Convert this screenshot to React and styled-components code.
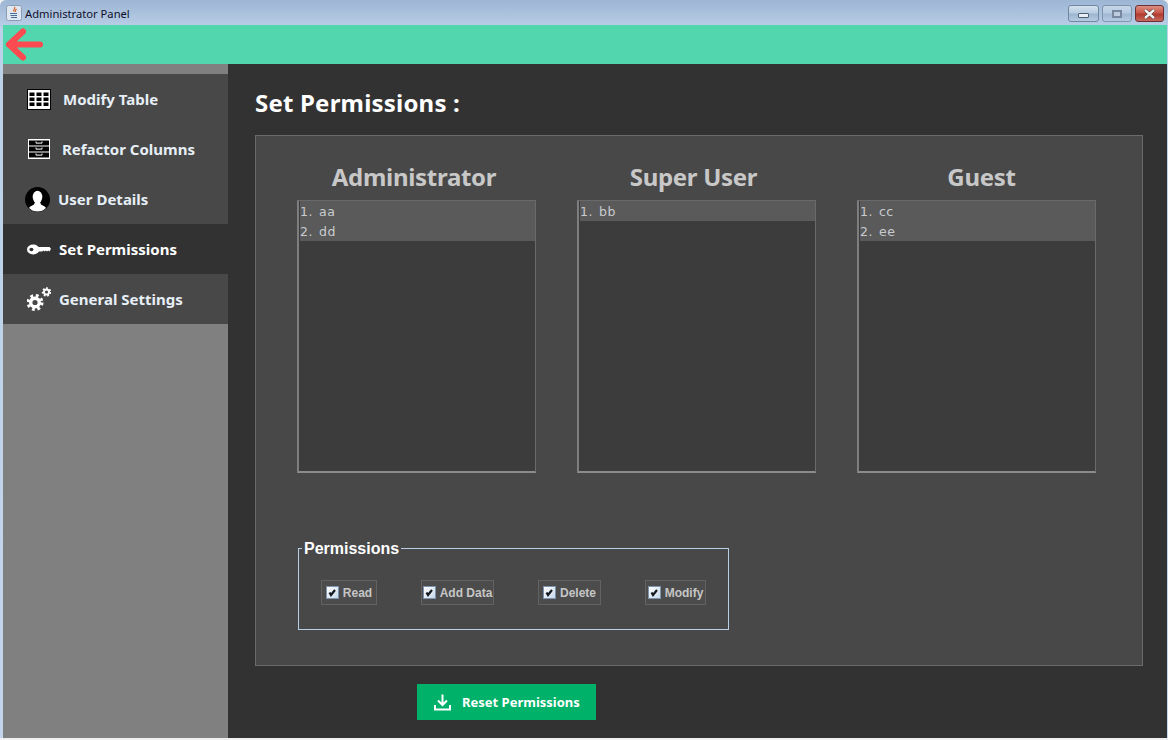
import React from 'react'
import styled, { createGlobalStyle } from 'styled-components'

const GlobalStyle = createGlobalStyle`
  html, body {
    margin: 0;
    padding: 0;
    background: #f0f0f0;
    overflow: hidden;
  }
  * {
    box-sizing: border-box;
  }
`

const Window = styled.div`
  display: flex;
  flex-direction: column;
  width: 1168px;
  height: 738px;
  padding: 0 1px 0 3px;
  background: linear-gradient(180deg, #9db6d4 0%, #bcd0e8 4%, #c3d6ec 100%);
  border-radius: 6px 6px 0 0;
  font-family: 'Noto Sans', sans-serif;
`

const TitleBar = styled.div`
  display: flex;
  align-items: center;
  height: 25px;
  flex: none;
  padding-left: 3px;
`

const TitleText = styled.span`
  margin: 1px 0 0 3px;
  font-family: 'Noto Sans', sans-serif;
  font-size: 11.2px;
  color: #10102a;
`

const WindowControls = styled.div`
  display: flex;
  gap: 3px;
  margin-left: auto;
  margin-right: 3px;
  margin-top: 2px;
`

const ControlButton = styled.div`
  display: flex;
  align-items: center;
  justify-content: center;
  width: ${(props) => props.$width}px;
  height: 17px;
  border-radius: 3px;
  border: 1px solid ${(props) => (props.$close ? '#6d2f36' : '#71869f')};
  background: ${(props) =>
    props.$close
      ? 'linear-gradient(180deg, #dc8d80 0%, #c9584b 45%, #b23a2f 55%, #c5685c 100%)'
      : 'linear-gradient(180deg, #d4e1ef 0%, #b9cde2 45%, #9db5cf 55%, #b5cbe2 100%)'};
  opacity: ${(props) => (props.$dim ? 0.75 : 1)};
`

const MinimizeGlyph = styled.div`
  width: 11px;
  height: 5px;
  margin-top: 4px;
  background: #e8eef5;
  border: 1px solid #4f5f73;
  border-radius: 1px;
`

const RestoreGlyph = styled.div`
  width: 10px;
  height: 8px;
  background: #c2cfdd;
  border: 2px solid #66758a;
`

const Toolbar = styled.div`
  display: flex;
  align-items: center;
  flex: none;
  height: 39px;
  background: #52d6ae;
`

const Body = styled.div`
  display: flex;
  flex: 1;
  min-height: 0;
`

const Sidebar = styled.nav`
  display: flex;
  flex-direction: column;
  flex: none;
  width: 225px;
  padding-top: 10px;
  background: #808080;
`

const NavItem = styled.div`
  display: flex;
  align-items: center;
  height: 50px;
  padding-left: ${(props) => props.$inset}px;
  gap: ${(props) => props.$gap}px;
  background: ${(props) => (props.$active ? '#323232' : '#484848')};
  font-size: 15px;
  font-weight: 700;
  color: ${(props) => (props.$active ? '#ffffff' : '#e6eef6')};
`

const Main = styled.main`
  display: flex;
  flex-direction: column;
  flex: 1;
  padding: 24px 24px 0 27px;
  background: #323232;
`

const PageTitle = styled.h1`
  margin: 0;
  height: 47px;
  font-size: 24px;
  line-height: 30px;
  font-weight: 700;
  letter-spacing: 0.2px;
  color: #ffffff;
`

const Panel = styled.section`
  display: flex;
  flex-direction: column;
  width: 888px;
  height: 531px;
  padding: 24px 0 0 41px;
  background: #484848;
  border: 1px solid #6a6a6a;
`

const Columns = styled.div`
  display: flex;
  gap: 41px;
`

const Column = styled.div`
  display: flex;
  flex-direction: column;
  width: 239px;
`

const ColumnTitle = styled.h2`
  margin: 0;
  height: 40px;
  padding-left: ${(props) => Math.max(props.$shift, 0)}px;
  padding-right: ${(props) => Math.max(-props.$shift, 0)}px;
  font-size: 24px;
  line-height: 34px;
  font-weight: 700;
  letter-spacing: -0.3px;
  text-align: center;
  color: #c8c8c8;
`

const RoleList = styled.ol`
  list-style: none;
  margin: 0;
  height: 273px;
  padding: 0 0 0 1px;
  background: #3c3c3c;
  border-top: 1px solid #6a6a6a;
  border-right: 1px solid #6a6a6a;
  border-left: 2px solid #7e7e7e;
  border-bottom: 2px solid #8c8c8c;
`

const RoleRow = styled.li`
  display: flex;
  align-items: center;
  height: 20px;
  background: #5a5a5a;
  font-family: 'DejaVu Sans', sans-serif;
  font-size: 12.5px;
  color: #c8ccd0;
  letter-spacing: 0.5px;
`

const RowIndex = styled.span`
  width: 19px;
`

const PermissionSet = styled.fieldset`
  width: 431px;
  height: 91px;
  margin: 66px 0 0 1px;
  padding: 0;
  border: 1px solid #b8cfe6;
  min-inline-size: 0;
`

const PermissionLegend = styled.legend`
  margin-left: 3px;
  padding: 0 2px;
  font-family: 'Liberation Sans', sans-serif;
  font-size: 16px;
  line-height: 19px;
  font-weight: 700;
  color: #ffffff;
`

const OptionRow = styled.div`
  display: flex;
  gap: 44px;
  padding: 22px 0 0 22px;
`

const CheckOption = styled.label`
  display: flex;
  align-items: center;
  justify-content: center;
  gap: 4px;
  width: ${(props) => props.$width}px;
  height: 25px;
  border: 1px solid #626262;
  background: #4c4c4c;
  font-family: 'Liberation Sans', sans-serif;
  font-size: 12px;
  font-weight: 700;
  color: #c6c6c6;
`

const CheckBox = styled.span`
  display: flex;
  align-items: center;
  justify-content: center;
  flex: none;
  width: 13px;
  height: 13px;
  border: 1px solid #7e93ad;
  background: linear-gradient(135deg, #ffffff 0%, #c6d8ea 100%);
`

const ResetButton = styled.button`
  display: flex;
  align-items: center;
  width: 179px;
  height: 36px;
  margin: 18px 0 0 162px;
  padding: 0 0 0 17px;
  gap: 11px;
  border: none;
  background: #00b16a;
  font-family: 'Noto Sans', sans-serif;
  font-size: 13px;
  font-weight: 700;
  color: #ffffff;
`

const JavaIcon = () => (
  <svg width="16" height="16" viewBox="0 0 16 16">
    <rect x="0.5" y="0.5" width="15" height="15" rx="2" fill="#dfe8f2" stroke="#8c9db3" />
    <path d="M8.500 2c1.500 1.500-2 2.500-.5 4.500M10.500 4c-1 1-2 1.500-1 3" stroke="#d8601f" strokeWidth="1.2" fill="none" />
    <path d="M4 8.500h7M4.500 10.500h6.500M5 12.500h6" stroke="#4a6c94" strokeWidth="1.1" fill="none" />
  </svg>
)

const CloseGlyph = () => (
  <svg width="13" height="10" viewBox="0 0 13 10">
    <path d="M2 1l9 8M11 1l-9 8" stroke="#4a2a2a" strokeWidth="3.6" />
    <path d="M2 1l9 8M11 1l-9 8" stroke="#f2f2f2" strokeWidth="2.4" />
  </svg>
)

const BackArrow = () => (
  <svg width="42" height="36" viewBox="0 0 42 36">
    <path
      d="M37 17.500H6M20 4.500L6 17.500 20 30.500"
      fill="none"
      stroke="#fb4a50"
      strokeWidth="6"
      strokeLinecap="round"
      strokeLinejoin="round"
    />
  </svg>
)

const TableIcon = () => (
  <svg width="24" height="21" viewBox="0 0 24 21">
    <rect width="24" height="21" fill="#000" />
    <rect x="1" y="1" width="22" height="19" fill="#fff" />
    {[3.500, 8.500, 13.500].map((y) =>
      [2.500, 9.500, 16.500].map((x) => <rect key={`${x}-${y}`} x={x} y={y} width="5" height="3.500" fill="#000" />)
    )}
  </svg>
)

const CabinetIcon = () => (
  <svg width="22" height="20" viewBox="0 0 22 20">
    <rect width="22" height="20" fill="#fff" />
    {[1.500, 7.500, 13.500].map((y) => (
      <g key={y}>
        <rect x="1" y={y} width="20" height="5" fill="#000" />
        <path d={`M8 ${y + 1}v1.600h6v-1.600`} fill="none" stroke="#fff" strokeWidth="1" />
      </g>
    ))}
  </svg>
)

const UserIcon = () => (
  <svg width="25" height="25" viewBox="0 0 25 25">
    <circle cx="12.500" cy="12.500" r="12.500" fill="#000" />
    <clipPath id="user-clip">
      <circle cx="12.500" cy="12.500" r="12" />
    </clipPath>
    <g clipPath="url(#user-clip)" fill="#fff">
      <ellipse cx="12.500" cy="10" rx="4.800" ry="6.300" />
      <path d="M10 15h5l1 2.500 4.500 2.500 1 5H3.500l1-5L9 17.500z" />
    </g>
  </svg>
)

const KeyIcon = () => (
  <svg width="24" height="11" viewBox="0 0 24 11">
    <ellipse cx="6.200" cy="5.500" rx="6.200" ry="5" fill="#fff" />
    <path d="M10 3h12.500l1.500 1.800-1.500 2.700-1.300-.9-1.200.9-1.200-.9-1.200.9-1.200-.9-1.200.9H10z" fill="#fff" />
    <ellipse cx="4.400" cy="5.500" rx="2" ry="1.800" fill="#323232" />
  </svg>
)

const Gear = ({ cx, cy, r, teeth, toothWidth, hole }) => {
  const outline = 2 * Math.PI * r
  const step = outline / teeth
  return (
    <g>
      <circle cx={cx} cy={cy} r={r} fill="none" stroke="#fff" strokeWidth={toothWidth} strokeDasharray={`${step / 2} ${step / 2}`} />
      <circle cx={cx} cy={cy} r={r} fill="#fff" />
      <circle cx={cx} cy={cy} r={hole} fill="#484848" />
    </g>
  )
}

const GearsIcon = () => (
  <svg width="24" height="24" viewBox="0 0 24 24">
    <Gear cx={8} cy={15.500} r={6} teeth={8} toothWidth={5} hole={2.600} />
    <Gear cx={19.500} cy={5} r={3.500} teeth={7} toothWidth={2.500} hole={1.600} />
  </svg>
)

const DownloadIcon = () => (
  <svg width="17" height="17" viewBox="0 0 17 17">
    <path d="M8.500 0.500v10M4 6.500l4.500 4.500L13 6.500M1 11v4.500h15V11" fill="none" stroke="#fff" strokeWidth="2" />
  </svg>
)

const CheckMark = () => (
  <svg width="9" height="9" viewBox="0 0 9 9">
    <path d="M1.500 4.500l1.500 2.500L7 2" fill="none" stroke="#14181f" strokeWidth="2.200" />
  </svg>
)

const navItems = [
  { label: 'Modify Table', icon: <TableIcon />, inset: 24, gap: 12 },
  { label: 'Refactor Columns', icon: <CabinetIcon />, inset: 25, gap: 12 },
  { label: 'User Details', icon: <UserIcon />, inset: 22, gap: 8 },
  { label: 'Set Permissions', icon: <KeyIcon />, inset: 24, gap: 8, active: true },
  { label: 'General Settings', icon: <GearsIcon />, inset: 24, gap: 8 },
]

const roles = [
  { name: 'Administrator', users: ['aa', 'dd'], shift: -5 },
  { name: 'Super User', users: ['bb'], shift: -6 },
  { name: 'Guest', users: ['cc', 'ee'], shift: 10 },
]

const permissions = [
  { name: 'Read', width: 56 },
  { name: 'Add Data', width: 73 },
  { name: 'Delete', width: 63 },
  { name: 'Modify', width: 61 },
]

const App = () => (
  <>
    <GlobalStyle />
    <Window>
      <TitleBar>
        <JavaIcon />
        <TitleText>Administrator Panel</TitleText>
        <WindowControls>
          <ControlButton $width={31}><MinimizeGlyph /></ControlButton>
          <ControlButton $width={30} $dim><RestoreGlyph /></ControlButton>
          <ControlButton $width={29} $close><CloseGlyph /></ControlButton>
        </WindowControls>
      </TitleBar>
      <Toolbar>
        <BackArrow />
      </Toolbar>
      <Body>
        <Sidebar>
          {navItems.map((item) => (
            <NavItem key={item.label} $inset={item.inset} $gap={item.gap} $active={item.active}>
              {item.icon}
              <span>{item.label}</span>
            </NavItem>
          ))}
        </Sidebar>
        <Main>
          <PageTitle>Set Permissions :</PageTitle>
          <Panel>
            <Columns>
              {roles.map((role) => (
                <Column key={role.name}>
                  <ColumnTitle $shift={role.shift}>{role.name}</ColumnTitle>
                  <RoleList>
                    {role.users.map((user, i) => (
                      <RoleRow key={user}>
                        <RowIndex>{i + 1}.</RowIndex>
                        <span>{user}</span>
                      </RoleRow>
                    ))}
                  </RoleList>
                </Column>
              ))}
            </Columns>
            <PermissionSet>
              <PermissionLegend>Permissions</PermissionLegend>
              <OptionRow>
                {permissions.map((option) => (
                  <CheckOption key={option.name} $width={option.width}>
                    <CheckBox><CheckMark /></CheckBox>
                    {option.name}
                  </CheckOption>
                ))}
              </OptionRow>
            </PermissionSet>
          </Panel>
          <ResetButton>
            <DownloadIcon />
            Reset Permissions
          </ResetButton>
        </Main>
      </Body>
    </Window>
  </>
)

export default App
